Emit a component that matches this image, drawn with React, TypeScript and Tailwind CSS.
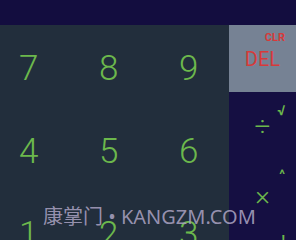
import React from "react";

const rows = [
  ["7", "8", "9"],
  ["4", "5", "6"],
  ["1", "2", "3"],
];

const ops = [
  { main: "÷", sup: "√", supCls: "top-[11px] text-[14px] font-bold" },
  { main: "×", sup: "^", supCls: "top-[7px] text-[13px] font-bold" },
  { main: "−", sup: "!", supCls: "top-[3px] text-[13px] font-bold" },
];

export default function App() {
  return (
    <div
      className="relative w-[296px] h-[240px] overflow-hidden bg-[#222e3c]"
      style={{ fontFamily: "Roboto, 'Noto Sans', sans-serif" }}
    >
      <div className="h-[25px] bg-[#130d3f]" />
      <div className="flex h-[215px]">
        <div className="w-[229px] shrink-0 overflow-hidden bg-[#222e3c] pt-[26px] pl-[19px]">
          {rows.map((r, i) => (
            <div key={i} className="flex h-[83px] shrink-0">
              {r.map((d) => (
                <div
                  key={d}
                  className="w-[80px] shrink-0 text-[35px] font-light leading-none text-[#6cb84c]"
                >
                  {d}
                </div>
              ))}
            </div>
          ))}
        </div>
        <div className="w-[67px] shrink-0 flex flex-col overflow-hidden">
          <div className="h-[67px] shrink-0 bg-[#768294] flex flex-col pt-[7px]">
            <div className="text-right pr-[11px] text-[11px] font-bold leading-none text-[#d63a3a]">
              CLR
            </div>
            <div className="mt-[6px] text-center text-[20px] leading-none text-[#d63a3a]">
              DEL
            </div>
          </div>
          <div className="flex-1 min-h-0 bg-[#150f42]">
            {ops.map((o, i) => (
              <div
                key={i}
                className="relative h-[69px] shrink-0 flex items-center justify-center text-[28px] font-light leading-none text-[#6cb84c]"
              >
                <span>{o.main}</span>
                <span
                  className={`absolute right-[11px] leading-none text-[#6cb84c] ${o.supCls}`}
                >
                  {o.sup}
                </span>
              </div>
            ))}
          </div>
        </div>
      </div>
      <div
        className="absolute left-[43px] top-[207px] text-[20px] leading-none text-[#a69fbe]/90 whitespace-nowrap"
        style={{ fontFamily: "'Noto Sans', 'Noto Sans CJK SC', sans-serif" }}
      >
        康掌门 • KANGZM.COM
      </div>
    </div>
  );
}
